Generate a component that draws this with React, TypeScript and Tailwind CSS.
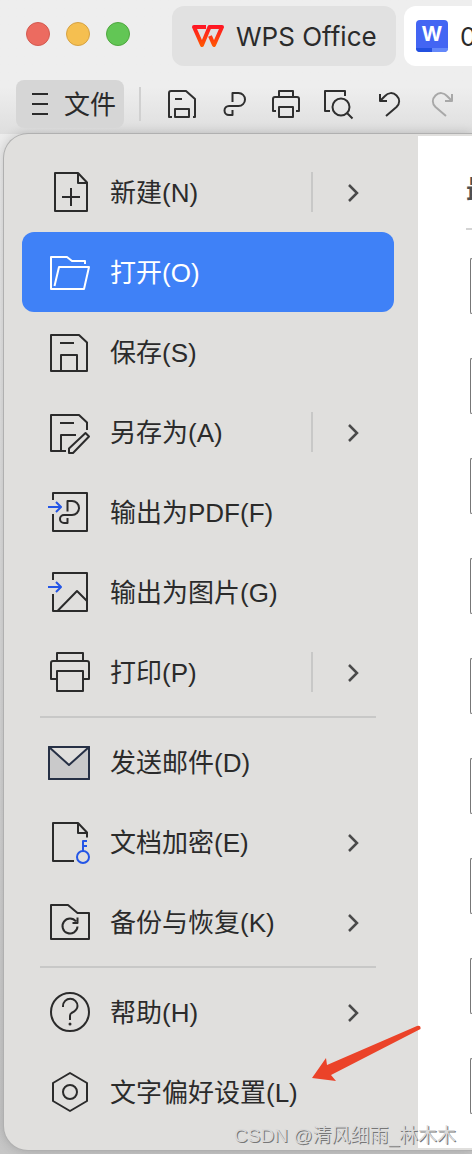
import type { ReactNode } from "react";

function Glyph({ size, children }: { size: 32 | 44; children: ReactNode }) {
  return (
    <svg
      viewBox={`0 0 ${size} ${size}`}
      className={size === 44 ? "size-11 shrink-0" : "size-8 shrink-0"}
      fill="none"
      stroke="currentColor"
      strokeWidth="2"
      strokeLinejoin="round"
      aria-hidden="true"
    >
      {children}
    </svg>
  );
}

const blue = "#2456e6";

const exportArrow = <path d="M0 17h13M8 12l5 5-5 5" stroke={blue} />;

type Item = { label: string; icon: ReactNode; more?: boolean; split?: boolean; active?: boolean };

const groups: Item[][] = [
  [
    {
      label: "新建(N)",
      more: true,
      split: true,
      icon: <path d="M7 3H30L39 12.500V41H7ZM30 3V13H39M23 18V36M14 27H32" />,
    },
    {
      label: "打开(O)",
      active: true,
      icon: <path d="M37 14V11H24L19 7H3V39H36L41 17H11L6.500 36" />,
    },
    { label: "保存(S)", icon: <path d="M3 5H31L39 12.500V41H3ZM12 13H26M13 41V25H29V41" /> },
    {
      label: "另存为(A)",
      more: true,
      split: true,
      icon: (
        <path d="M18 41H3V5H31L39 12.500V20M12 13H26M13 41V25H28M21 43V38.500L37.500 23L41 26.500L25 43Z" />
      ),
    },
    {
      label: "输出为PDF(F)",
      icon: (
        <>
          <path d="M5 10V3H39V41H5V24" />
          <path d="M19.500 21.500V11H24a7 7 0 0 1 0 14H16a4 4 0 0 0 0 8h3.500v-5" />
          {exportArrow}
        </>
      ),
    },
    {
      label: "输出为图片(G)",
      icon: (
        <>
          <path d="M5 10V3H39V41H5V24M9.500 41L29 21L39 31" />
          {exportArrow}
        </>
      ),
    },
    {
      label: "打印(P)",
      more: true,
      split: true,
      icon: (
        <path d="M9 11V3H35V11M9 29H3V13a2 2 0 0 1 2-2H39a2 2 0 0 1 2 2V29H35M9 21H35V41H9Z" />
      ),
    },
  ],
  [
    {
      label: "发送邮件(D)",
      icon: (
        <g stroke="#263045">
          <path d="M1 7L21 25L41 7V39H1Z" fill="#c9c9ca" />
          <path d="M1 7H41V39H1Z" />
        </g>
      ),
    },
    {
      label: "文档加密(E)",
      more: true,
      icon: (
        <>
          <path d="M26 41H5V3H30L39 12.500V17.500M30 3V13H39" />
          <g stroke={blue}>
            <circle cx="35" cy="37" r="6" />
            <path d="M35 31V21H39M35 26H39" />
          </g>
        </>
      ),
    },
    {
      label: "备份与恢复(K)",
      more: true,
      icon: (
        <path d="M3 5H20L29.500 13H41V39H3ZM29.500 26.500A7.500 7.500 0 1 1 28 21.500M29.500 17.500V23H24.500" />
      ),
    },
  ],
  [
    {
      label: "帮助(H)",
      more: true,
      icon: (
        <>
          <circle cx="22" cy="22" r="19" />
          <path d="M15 17V16a7.200 7.200 0 0 1 14.500 0c0 4-3 5.500-6 7-1 .6-1.500 1.300-1.500 3V30" />
          <circle cx="22" cy="34" r="1.500" fill="currentColor" stroke="none" />
        </>
      ),
    },
    {
      label: "文字偏好设置(L)",
      icon: (
        <>
          <path d="M22 3L39 13V31L22 41L5 31V13Z" />
          <circle cx="22" cy="22" r="7" />
        </>
      ),
    },
  ],
];

const undoPath = "M6 6V13H13M6.500 12.500L11 8C14 4.500 19 4 22.500 7.500C26 11 26 15.500 22.500 19L12 28";

const tools: { label: string; disabled?: boolean; icon: ReactNode }[] = [
  {
    label: "保存",
    icon: <path d="M6 29H3V5a2 2 0 0 1 2-2H20L29 11V29H27M9 29V21H23V29ZM9 11H16" />,
  },
  {
    label: "输出为PDF",
    icon: <path d="M14.500 14V5H20.500a6.500 6.500 0 0 1 0 13H11a4.500 4.500 0 0 0 0 9h3.500v-5" />,
  },
  {
    label: "打印",
    icon: (
      <path d="M9 9V3H23V9M6 23H3V11a2 2 0 0 1 2-2H27a2 2 0 0 1 2 2V23H26M9 19H23V29H9Z" />
    ),
  },
  {
    label: "打印预览",
    icon: (
      <>
        <path d="M8 23H3V3H23V8M25 25L30.500 30.500" />
        <circle cx="19" cy="19" r="8.500" />
      </>
    ),
  },
  { label: "撤销", icon: <path d={undoPath} /> },
  {
    label: "恢复",
    disabled: true,
    icon: <path d={undoPath} transform="translate(32 0) scale(-1 1)" />,
  },
];

function MenuItem({ label, icon, more, split, active }: Item) {
  return (
    <button
      type="button"
      className={
        active
          ? "flex h-20 w-full items-center rounded-xl bg-[#3f81f7] pr-8 pl-[26px] text-left text-white"
          : "flex h-20 w-full items-center rounded-xl pr-8 pl-[26px] text-left text-[#2b2b2b]"
      }
    >
      <Glyph size={44}>{icon}</Glyph>
      <span className="ml-[18px] flex-1 pt-0.5 whitespace-nowrap">{label}</span>
      {split && <span className="mr-[33px] h-10 w-0.5 bg-[#c8c8c7]" />}
      {more && (
        <svg viewBox="0 0 16 20" className="h-5 w-4" fill="none" stroke="#4a4a4a" strokeWidth="2.500" aria-hidden="true">
          <path d="M3 3L11 11L3 19" />
        </svg>
      )}
    </button>
  );
}

export default function App() {
  return (
    <div className="relative overflow-hidden bg-linear-to-b from-[#eeeeee] from-8% to-[#c6c6c6] to-100% pb-1 font-['Liberation_Sans','Noto_Sans_CJK_SC',sans-serif] text-[26px] leading-8 text-[#2b2b2b]">
      <div className="bg-linear-to-b from-[#eeeeee] from-65% to-[#dedede]">
        <header className="flex items-center gap-2 overflow-hidden pt-1.5 font-['Inter','Noto_Sans_CJK_SC',sans-serif]">
          <div className="mr-[34px] ml-[26px] flex shrink-0 gap-4 pb-1">
            <button type="button" aria-label="关闭" className="size-6 rounded-full border border-[#d35a50] bg-[#ec6b60]" />
            <button type="button" aria-label="最小化" className="size-6 rounded-full border border-[#d6a243] bg-[#f5bf50]" />
            <button type="button" aria-label="缩放" className="size-6 rounded-full border border-[#4fa73f] bg-[#62c655]" />
          </div>
          <button type="button" className="flex h-[60px] w-56 shrink-0 items-center gap-3 rounded-xl bg-[#e1e1e1] pl-5 whitespace-nowrap">
            <svg viewBox="0 0 32 22" className="h-[22px] w-8 shrink-0" fill="none" strokeWidth="4" strokeLinejoin="round" aria-hidden="true">
              <defs>
                <linearGradient id="wps" x1="0" y1="0" x2="0" y2="22" gradientUnits="userSpaceOnUse">
                  <stop stopColor="#ff1226" />
                  <stop offset="1" stopColor="#ff5a00" />
                </linearGradient>
              </defs>
              <path d="M14 2H2L10 20L17.500 2H30L22 20L18 11" stroke="url(#wps)" />
            </svg>
            <span className="pt-0.5">WPS Office</span>
          </button>
          <button type="button" className="flex h-[60px] min-w-0 flex-1 items-center gap-3 overflow-hidden rounded-l-xl bg-white pl-3">
            <span className="relative flex size-8 shrink-0 items-center justify-center overflow-hidden rounded-sm bg-[#4365f3] pb-1 text-xl font-bold text-white">
              W
              <span className="absolute inset-x-0 bottom-0 flex h-1">
                <span className="flex-1 bg-[#2350e0]" />
                <span className="flex-1 bg-[#6488fa]" />
              </span>
            </span>
            <span className="pt-0.5">0</span>
          </button>
        </header>

        <div className="flex items-center overflow-hidden pt-3.5 pb-1.5 pl-4">
          <button type="button" className="flex h-12 w-[108px] shrink-0 items-center gap-4 rounded-lg bg-[#d6d6d6] pl-4 whitespace-nowrap">
            <svg viewBox="0 0 16 24" className="h-6 w-4 shrink-0" stroke="currentColor" strokeWidth="2" aria-hidden="true">
              <path d="M0 2H16M0 12H16M0 22H16" />
            </svg>
            <span className="pt-0.5">文件</span>
          </button>
          <span className="mr-[25px] ml-[15px] h-[34px] w-0.5 shrink-0 bg-[#d0d0d0]" />
          <div className="flex gap-5">
            {tools.map((tool) => (
              <button
                key={tool.label}
                type="button"
                aria-label={tool.label}
                disabled={tool.disabled}
                className={tool.disabled ? "text-[#a8a8a8]" : "text-[#2f2f2f]"}
              >
                <Glyph size={32}>{tool.icon}</Glyph>
              </button>
            ))}
          </div>
        </div>
      </div>

      <main className="ml-1 flex overflow-hidden rounded-l-3xl bg-[#e0dfdd] shadow-[0_0_0_1px_#b0b0b0,0_0_12px_rgba(0,0,0,0.2)]">
        <nav className="w-[414px] shrink-0 py-[18px] pr-6 pl-[18px]">
          {groups.map((group, index) => (
            <div key={index}>
              {index > 0 && <hr className="my-1 mr-[18px] ml-[18px] h-0.5 border-0 bg-[#c8c8c7]" />}
              {group.map((item) => (
                <MenuItem key={item.label} {...item} />
              ))}
            </div>
          ))}
        </nav>
        <section className="my-0.5 min-w-0 flex-1 overflow-hidden bg-white pt-[38px] pl-12">
          <h2 className="h-14 border-b-2 border-[#d4d4d4] font-bold whitespace-nowrap text-[#505050]">最近</h2>
          <ul className="flex flex-col gap-11 pt-7 pl-1">
            {Array.from({ length: 9 }, (_, index) => (
              <li key={index} className="h-14 rounded-l-sm border border-r-0 border-[#777777]" />
            ))}
          </ul>
        </section>
      </main>

      <svg viewBox="0 0 110 58" className="absolute top-[1024px] left-[311px] h-[58px] w-[110px]" aria-hidden="true">
        <path d="M1 54L15 34L16 41L106 2Q110 1 109.500 5L20 51L25 57Z" fill="#eb4329" />
      </svg>
      <p className="absolute right-4 bottom-0.5 text-[19px] whitespace-nowrap text-[#d9d9d9] [text-shadow:1px_1px_0_#777777]">
        CSDN @清风细雨_林木木
      </p>
    </div>
  );
}
